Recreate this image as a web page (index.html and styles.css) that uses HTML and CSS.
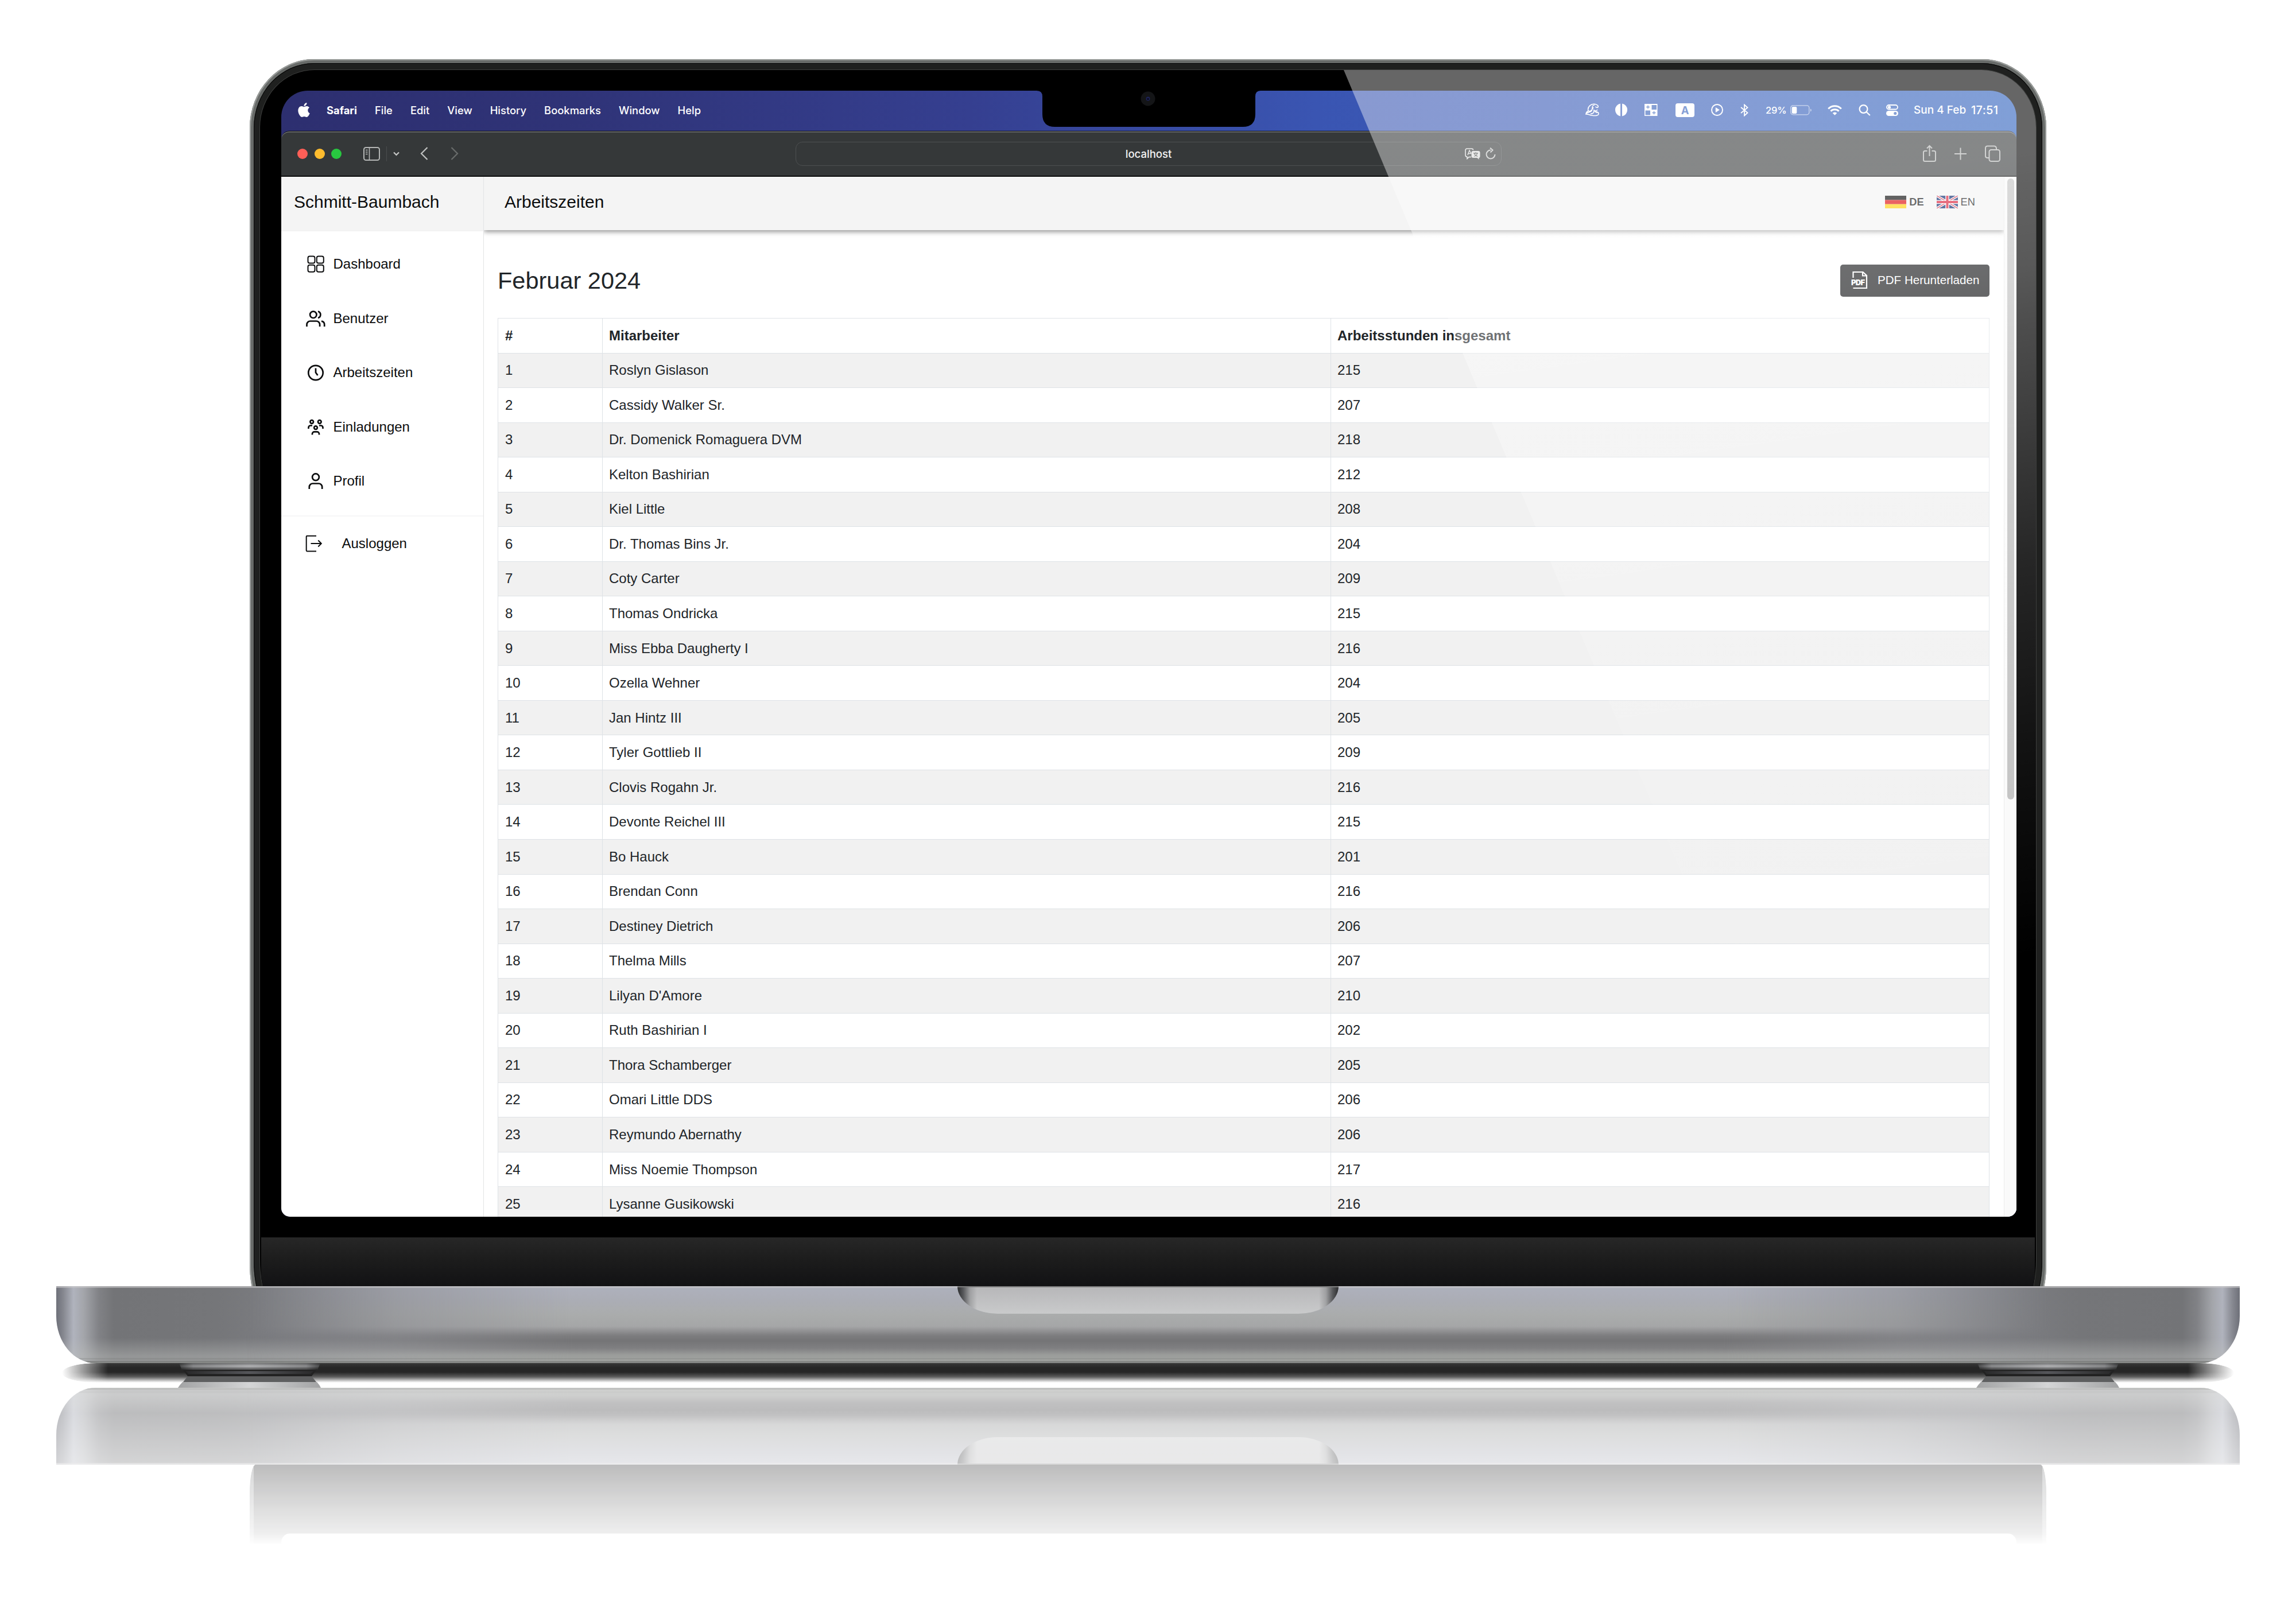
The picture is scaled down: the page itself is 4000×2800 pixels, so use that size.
FILE: index.html
```html
<!DOCTYPE html>
<html lang="de">
<head>
<meta charset="utf-8">
<title>Arbeitszeiten</title>
<link rel="stylesheet" href="styles.css">
</head>
<body>
<div class="laptop">
  <div class="lid"><div class="rim"><div class="glass">
    <div class="screen">
      <header class="menubar">
        <nav class="menus">
          <svg class="apple" width="21" height="25" viewBox="2 0 20 24" fill="#fff"><path d="M12.152 6.896c-.948 0-2.415-1.078-3.96-1.04-2.04.027-3.91 1.183-4.961 3.014-2.117 3.675-.546 9.103 1.519 12.09 1.013 1.454 2.208 3.09 3.792 3.039 1.52-.065 2.09-.987 3.935-.987 1.831 0 2.35.987 3.96.948 1.637-.026 2.676-1.48 3.676-2.948 1.156-1.688 1.636-3.325 1.662-3.415-.039-.013-3.182-1.221-3.22-4.857-.026-3.04 2.48-4.494 2.597-4.559-1.429-2.09-3.623-2.324-4.39-2.376-2-.156-3.675 1.09-4.61 1.09zM15.53 3.83c.843-1.012 1.4-2.427 1.245-3.83-1.207.052-2.662.805-3.532 1.818-.78.896-1.454 2.338-1.273 3.714 1.338.104 2.715-.688 3.559-1.701"/></svg>
          <b>Safari</b><span>File</span><span>Edit</span><span>View</span><span>History</span><span>Bookmarks</span><span>Window</span><span>Help</span>
        </nav>
        <div class="status">
          <svg class="st-wave" width="25" height="23" viewBox="0 0 25 23" fill="none" stroke="#fff" stroke-width="1.6"><path d="M5 13C3 6 10 0 17 1.500c4 .8 6 3 5 5-1 1.500-4 1-4-1M5 13c-3 2-4 4-4 6 4-1 6 2 10 2 5 1 12 1 12-3 0-3-4-3-4-1M5 13c3 2 6 0 9-6M2 17c5-3 10 0 10-9 0-3 2-5 4-5M9 18c5 1 6-3 6-6 2 2 5 1 6-1M16 15c3-1 6 0 6 2"/></svg>
          <svg class="st-split" width="23" height="23" viewBox="0 0 23 23" fill="#fff"><path d="M10 0.500a11.200 11.200 0 0 0 0 22zM13 .5a11.200 11.200 0 0 1 0 22z"/></svg>
          <svg class="st-grid" width="23" height="21" viewBox="0 0 23 21"><path d="M0 0h22.500v21H0z" fill="#fff"/><path d="M12.500 2h8.500v8h-8.500zM1.500 11.500h8.500v8H1.500z" fill="#3560b9"/><path d="M3 5.500h6M6 2.700v5.500M13.500 15.500h6M16.500 12.700v5.500" stroke="#3560b9" stroke-width="1.500"/></svg>
          <span class="st-lang">A</span>
          <svg class="st-play" width="21" height="21" viewBox="0 0 21 21" fill="none"><circle cx="10.500" cy="10.500" r="9.500" stroke="#fff" stroke-width="1.900"/><path d="M7.800 6l7 4.500-7 4.500z" fill="#fff"/></svg>
          <svg class="st-bt" width="14" height="22" viewBox="0 0 14 22" fill="none" stroke="#fff" stroke-width="1.800"><path d="M1 6l11.500 9.500L7 20.500v-19l5.500 5L1 16"/></svg>
          <span class="st-pct">29%</span>
          <svg class="st-bat" width="37" height="18" viewBox="0 0 37 18" fill="none"><rect x=".8" y=".8" width="32" height="16" rx="4" stroke="#fff" stroke-opacity=".6" stroke-width="1.300"/><rect x="2.800" y="3" width="8.500" height="12" rx="2" fill="#fff"/><path d="M35 6.500v5q1.800-.8 1.800-2.500T35 6.500z" fill="#fff" opacity=".6"/></svg>
          <svg class="st-wifi" width="25" height="18" viewBox="0 0 25 18" fill="none" stroke="#fff" stroke-width="3"><path d="M1.200 6.500a16 16 0 0 1 22.600 0M5.500 10.700a10 10 0 0 1 14 0"/><path d="M12.500 17.800l-3.800-3.900a5.500 5.500 0 0 1 7.600 0z" fill="#fff" stroke="none"/></svg>
          <svg class="st-find" width="21" height="20" viewBox="0 0 21 20" fill="none" stroke="#fff" stroke-width="2.200"><circle cx="8.500" cy="8" r="6.900"/><path d="M13.500 13l6.300 6"/></svg>
          <svg class="st-cc" width="21" height="20" viewBox="0 0 21 20"><rect x="1" y="1" width="19" height="7.500" rx="3.700" fill="none" stroke="#fff" stroke-width="1.800"/><circle cx="5.500" cy="4.800" r="2.600" fill="#fff"/><rect x="0" y="11" width="21" height="9" rx="4.500" fill="#fff"/><circle cx="15.800" cy="15.500" r="2.600" fill="#3560b9"/></svg>
          <span class="st-date">Sun 4 Feb</span><span class="st-time">17:51</span>
        </div>
      </header>
      <div class="window">
        <div class="toolbar">
          <div class="tools-left">
            <i class="dot red"></i><i class="dot yellow"></i><i class="dot green"></i>
            <svg class="tb-side" width="29" height="24" viewBox="0 0 29 24" fill="none" stroke="#b4b6b5" stroke-width="2"><rect x="1" y="1" width="27" height="22" rx="3.500"/><path d="M10.500 1v22M4 5.500h3.500M4 9h3.500M4 12.500h3.500" stroke-width="1.600"/></svg>
            <i class="tb-rule"></i>
            <svg class="tb-chev" width="11" height="8" viewBox="0 0 11 8" fill="none" stroke="#c6c8c7" stroke-width="2.200"><path d="M1 1.500l4.500 4.500L10 1.500"/></svg>
            <svg class="tb-back" width="14" height="23" viewBox="0 0 14 23" fill="none" stroke="#c0c2c1" stroke-width="2.200"><path d="M12.500 1L2 11.500 12.500 22"/></svg>
            <svg class="tb-fwd" width="14" height="23" viewBox="0 0 14 23" fill="none" stroke="#696c6b" stroke-width="2.200"><path d="M1.500 1L12 11.500 1.500 22"/></svg>
          </div>
          <div class="address">
            <span>localhost</span>
            <div class="address-icons">
              <svg width="27" height="20" viewBox="0 0 27 20" fill="none"><path d="M11 15.500l-4 .1-3 3v-3.200Q1 15 1 12V4q0-3 3-3h7.500q3 0 3 2.500" stroke="#dcdddc" stroke-width="1.600"/><path d="M5 12l3-8 3 6M6 9.500h4" stroke="#dcdddc" stroke-width="1.400"/><path d="M14.500 5h9q3 0 3 3v6q0 3-2 3v3l-3-3h-7q-3 0-3-3V8q0-3 3-3z" fill="#dcdddc"/><path d="M15 9h8M19 7.300V9M16 14.500q5-1.500 5.500-5.500M16.500 9.500q1 3.500 6 5" stroke="#4b4e4d" stroke-width="1.300"/></svg>
              <svg width="18" height="21" viewBox="0 0 18 21" fill="none" stroke="#c4c6c5" stroke-width="2"><path d="M9 4.500a7.500 7.500 0 1 0 7.500 7.500M8 .7l4.500 3.900L8.500 8.500"/></svg>
            </div>
          </div>
          <div class="tools-right">
            <svg width="23" height="31" viewBox="0 0 23 31" fill="none" stroke="#b4b6b5" stroke-width="2"><path d="M7.500 11H3.500Q1 11 1 13.500v13Q1 29 3.500 29h16q2.500 0 2.500-2.500v-13Q22 11 19.500 11h-4M11.500 20V2M7 6.500L11.500 2 16 6.500"/></svg>
            <svg width="21" height="31" viewBox="0 0 21 31" fill="none" stroke="#b4b6b5" stroke-width="2"><path d="M10.500 5.500v21M0 16h21"/></svg>
            <svg width="27" height="31" viewBox="0 0 27 31" fill="none" stroke="#b4b6b5" stroke-width="2"><rect x="7.500" y="9" width="18.500" height="20" rx="3.500"/><path d="M7 23H4q-3-.5-3-3V6q0-3.500 3.500-3.500h12Q19.500 2.500 20 6v2"/></svg>
          </div>
        </div>
        <div class="page">
          <aside class="sidebar">
            <div class="brand">Schmitt-Baumbach</div>
            <nav class="nav">
              <a><svg width="36" height="36" viewBox="0 0 36 36"><rect x="4.500" y="4.500" width="12" height="12" rx="3"/><rect x="19.800" y="4.500" width="12" height="12" rx="3"/><rect x="4.500" y="19.800" width="12" height="12" rx="3"/><rect x="19.800" y="19.800" width="12" height="12" rx="3"/></svg>Dashboard</a>
              <a><svg class="bold" width="36" height="36" viewBox="0 0 36 36"><circle cx="13.800" cy="11.300" r="5.700"/><path d="M2.500 32v-3.500a6 6 0 0 1 6-6h10.600a6 6 0 0 1 6 6V32M22 5.600a5.900 5.900 0 0 1 0 11.400M28 22.600q5.200.8 5.200 6V32"/></svg>Benutzer</a>
              <a><svg class="bold" width="36" height="36" viewBox="0 0 36 36"><circle cx="18" cy="18.500" r="12.700"/><path d="M18 10.500v7.500l3.500 5"/></svg>Arbeitszeiten</a>
              <a><svg class="bold" width="36" height="36" viewBox="0 0 36 36"><circle cx="11.200" cy="9" r="2.800"/><circle cx="24.800" cy="9" r="2.800"/><circle cx="18" cy="19.200" r="2.800"/><path d="M5.500 21v-2a3.500 3.500 0 0 1 3.500-3.500h3M30.500 21v-2a3.500 3.500 0 0 0-3.500-3.500h-3M12 31.500v-1.500a3.700 3.700 0 0 1 3.700-3.700h4.600a3.700 3.700 0 0 1 3.700 3.700v1.500"/></svg>Einladungen</a>
              <a><svg class="bold" width="36" height="36" viewBox="0 0 36 36"><circle cx="18" cy="11.300" r="5.900"/><path d="M6.800 32v-3.500a6 6 0 0 1 6-6h10.400a6 6 0 0 1 6 6V32"/></svg>Profil</a>
            </nav>
            <a class="logout"><svg width="36" height="36" viewBox="0 0 36 36"><path d="M19 4.800H3q-1.300 0-1.300 1.300v24q0 1.300 1.300 1.300h16M9.500 18H27.500M22.300 12.500l5.500 5.500-5.500 5.500"/></svg>Ausloggen</a>
          </aside>
          <main class="main">
            <div class="topbar">
              <span>Arbeitszeiten</span>
              <div class="langs">
                <svg width="37" height="22" viewBox="0 0 37 22"><path d="M0 0h37v7.400H0z"/><path d="M0 7.400h37v7.300H0z" fill="#d00"/><path d="M0 14.700h37V22H0z" fill="#ffce00"/></svg><b>DE</b>
                <svg class="uk" width="37" height="22" viewBox="0 0 37 22"><path d="M0 0h37v22H0z" fill="#012169"/><path d="M0 0l37 22M37 0L0 22" stroke="#fff" stroke-width="4.200"/><path d="M0 0l37 22M37 0L0 22" stroke="#c8102e" stroke-width="1.500"/><path d="M18.500 0v22M0 11h37" stroke="#fff" stroke-width="6.600"/><path d="M18.500 0v22M0 11h37" stroke="#d8142f" stroke-width="4"/></svg><span>EN</span>
              </div>
            </div>
            <div class="content">
              <div class="headline">
                <h1>Februar 2024</h1>
                <button class="pdf"><svg width="29" height="32" viewBox="0 0 29 32" fill="none" stroke="#fff" stroke-width="2.200"><path d="M3.500 12V2H20.500L27 8v22H3.500M20 2v6.500h7"/><text x="0" y="24.500" textLength="24" font-family="Inter, sans-serif" font-weight="900" font-size="13" fill="#fff" stroke="none">PDF</text></svg>PDF Herunterladen</button>
              </div>
              <table class="hours">
                <thead><tr><th>#</th><th>Mitarbeiter</th><th>Arbeitsstunden insgesamt</th></tr></thead>
                <tbody>
                <tr><td>1</td><td>Roslyn Gislason</td><td>215</td></tr>
                <tr><td>2</td><td>Cassidy Walker Sr.</td><td>207</td></tr>
                <tr><td>3</td><td>Dr. Domenick Romaguera DVM</td><td>218</td></tr>
                <tr><td>4</td><td>Kelton Bashirian</td><td>212</td></tr>
                <tr><td>5</td><td>Kiel Little</td><td>208</td></tr>
                <tr><td>6</td><td>Dr. Thomas Bins Jr.</td><td>204</td></tr>
                <tr><td>7</td><td>Coty Carter</td><td>209</td></tr>
                <tr><td>8</td><td>Thomas Ondricka</td><td>215</td></tr>
                <tr><td>9</td><td>Miss Ebba Daugherty I</td><td>216</td></tr>
                <tr><td>10</td><td>Ozella Wehner</td><td>204</td></tr>
                <tr><td>11</td><td>Jan Hintz III</td><td>205</td></tr>
                <tr><td>12</td><td>Tyler Gottlieb II</td><td>209</td></tr>
                <tr><td>13</td><td>Clovis Rogahn Jr.</td><td>216</td></tr>
                <tr><td>14</td><td>Devonte Reichel III</td><td>215</td></tr>
                <tr><td>15</td><td>Bo Hauck</td><td>201</td></tr>
                <tr><td>16</td><td>Brendan Conn</td><td>216</td></tr>
                <tr><td>17</td><td>Destiney Dietrich</td><td>206</td></tr>
                <tr><td>18</td><td>Thelma Mills</td><td>207</td></tr>
                <tr><td>19</td><td>Lilyan D'Amore</td><td>210</td></tr>
                <tr><td>20</td><td>Ruth Bashirian I</td><td>202</td></tr>
                <tr><td>21</td><td>Thora Schamberger</td><td>205</td></tr>
                <tr><td>22</td><td>Omari Little DDS</td><td>206</td></tr>
                <tr><td>23</td><td>Reymundo Abernathy</td><td>206</td></tr>
                <tr><td>24</td><td>Miss Noemie Thompson</td><td>217</td></tr>
                <tr><td>25</td><td>Lysanne Gusikowski</td><td>216</td></tr>
                </tbody>
              </table>
            </div>
          </main>
          <div class="scrolltrack"><div class="thumb"></div></div>
        </div>
      </div>
      <svg class="notch" width="390" height="64" viewBox="0 0 390 64"><path d="M0 0h390q-9 0-9 10v31q0 22-22 22H32Q10 63 10 41V10Q10 0 0 0z"/><circle cx="194" cy="14" r="12.500" fill="#141517"/><circle cx="194" cy="14" r="3.500" fill="#1c2156"/><circle cx="194" cy="14.500" r="1.500" fill="#05060c"/></svg>
    </div>
    <div class="chin"></div>
    <div class="glare"></div>
  </div></div></div>
  <div class="deck"><div class="grip"></div></div>
  <div class="gap">
    <div class="shadow"></div>
    <svg class="foot" width="250" height="43" viewBox="0 0 250 43"><use href="#footshape"/></svg>
    <svg class="foot" width="250" height="43" viewBox="0 0 250 43">
      <defs>
        <linearGradient id="fa"><stop offset="0" stop-color="#4a4b4c"/><stop offset=".1" stop-color="#8d8e90"/><stop offset=".5" stop-color="#b4b5b7"/><stop offset=".9" stop-color="#8d8e90"/><stop offset="1" stop-color="#4a4b4c"/></linearGradient>
        <linearGradient id="fb" x2="0" y2="1"><stop offset="0" stop-color="#000" stop-opacity=".35"/><stop offset=".45" stop-color="#000" stop-opacity="0"/><stop offset="1" stop-color="#000" stop-opacity=".6"/></linearGradient>
        <linearGradient id="fc"><stop offset="0" stop-color="#2a2a2b"/><stop offset=".5" stop-color="#55565a"/><stop offset="1" stop-color="#2a2a2b"/></linearGradient>
        <linearGradient id="fd"><stop offset="0" stop-color="#a2a3a4"/><stop offset=".5" stop-color="#d4d5d6"/><stop offset="1" stop-color="#a2a3a4"/></linearGradient>
        <g id="footshape"><path d="M2 0h246l-5 12H7z" fill="url(#fa)"/><path d="M2 0h246l-5 12H7z" fill="url(#fb)"/><path d="M9 12h232l-8 11H17z" fill="#222"/><path d="M14 14h222l-5 5H18z" fill="url(#fc)"/><path d="M17 23h216l8 10H9z" fill="#5e5f60"/><path d="M8 33h234q4 4 7 10H0q4-6 8-10z" fill="url(#fd)"/></g>
      </defs>
      <use href="#footshape"/>
    </svg>
  </div>
  <div class="deck-mirror"><div class="deck"><div class="grip"></div></div></div>
  <div class="lid-mirror"><div class="mirror-rim"><div class="mirror-glass"></div></div></div>
</div>
</body>
</html>
```
FILE: styles.css
```css
* { box-sizing: border-box; }
body {
  margin: 0;
  width: 4000px;
  height: 2800px;
  overflow: hidden;
  background: #fff;
  font-family: "Liberation Sans", Arial, sans-serif;
}
svg { display: block; flex: none; }
.laptop { display: flex; flex-direction: column; align-items: center; padding-top: 103px; }

/* Lid */
.lid {
  width: 3130px;
  height: 2199px;
  margin-bottom: -61px;
  padding: 7px;
  background: #686b69;
  border-radius: 112px 112px 45px 45px / 120px 120px 100px 100px;
  box-shadow: inset 0 0 0 1px #8d908e, inset 0 0 0 2px #a4a7a5;
}
.rim {
  height: 100%;
  padding: 12px 11px 0;
  background: #1f201f;
  border-radius: 105px 105px 42px 42px / 113px 113px 98px 98px;
  box-shadow: inset 0 0 0 1px #050505;
}
.glass {
  position: relative;
  height: 100%;
  padding: 36px 34px 0 37px;
  background: #000;
  overflow: hidden;
  border-radius: 95px 95px 42px 42px / 100px 100px 100px 100px;
  box-shadow: 0 0 0 1px #3d3e3d;
}
.chin {
  height: 160px;
  margin: 36px -32px 0 -35px;
  background: linear-gradient(#272727, #1c1c1c 40px, #121214 85px);
  border-radius: 0 0 42px 42px / 0 0 100px 100px;
}
.glare {
  position: absolute;
  top: 0;
  left: 0;
  right: 0;
  height: 1600px;
  clip-path: polygon(1888px 0, 100% 0, 100% 100%, 2560px 100%);
  background: linear-gradient(172deg, rgba(255,255,255,.4), rgba(255,255,255,.4) 570px, rgba(255,255,255,.35) 764px, rgba(255,255,255,.3) 870px, rgba(255,255,255,.15) 1279px, rgba(255,255,255,.07) 1596px, rgba(255,255,255,0) 1960px);
}

/* Screen */
.screen {
  position: relative;
  height: 1962px;
  overflow: hidden;
  display: flex;
  flex-direction: column;
  border-radius: 46px 46px 15px 15px;
  background: linear-gradient(90deg, #2d2f70, #2f3377 500px, #353f90 1200px, #3a55b2 1800px, #3759b6 2200px, #2c5fbc);
}
.notch { position: absolute; left: 1316px; top: 0; }
.menubar {
  height: 70px;
  padding: 0 26px 3px 29px;
  display: flex;
  align-items: center;
  justify-content: space-between;
  color: #fff;
  font: 500 18.4px/24px Inter, sans-serif;
}
.menus { display: flex; align-items: center; gap: 31px; }
.menus b { font-weight: 700; }
.apple { margin-right: -2px; }
.status { display: flex; align-items: center; white-space: nowrap; }
.st-split { margin-left: 26px; }
.st-grid { margin-left: 29.5px; }
.st-lang {
  width: 33px; height: 24px; margin-left: 31px;
  border-radius: 4px; background: #fff; color: #3560b9;
  font-weight: 700; text-align: center;
}
.st-play { margin-left: 29px; }
.st-bt { margin-left: 30px; }
.st-pct { width: 36px; margin-left: 30px; font-size: 16.500px; letter-spacing: -.2px; }
.st-bat { margin-left: 7px; }
.st-wifi { margin-left: 28px; }
.st-find { margin-left: 29px; }
.st-cc { margin-left: 27px; }
.st-date { width: 90px; margin-left: 27px; font-size: 19px; }
.st-time { width: 53px; margin-left: 10px; font-size: 20px; letter-spacing: .3px; }

.window {
  flex: 1;
  min-height: 0;
  display: flex;
  flex-direction: column;
  border-radius: 14px 14px 0 0;
  overflow: hidden;
}
.toolbar {
  height: 80px;
  flex: none;
  display: grid;
  grid-template-columns: 1fr 1228px 1fr;
  align-items: center;
  background: #353839;
  border-top: 1px solid #0b0b0d;
  border-bottom: 2px solid #0c0d0d;
  border-radius: 14px 14px 0 0;
  box-shadow: inset 0 1.500px #747676;
}
.tools-left { display: flex; align-items: center; padding-left: 28px; }
.dot { width: 18px; height: 18px; border-radius: 50%; margin-right: 11.7px; }
.red { background: #ff5f57; }
.yellow { background: #febc2e; }
.green { background: #28c840; }
.tb-side { margin-left: 26px; }
.tb-rule { width: 1px; height: 26px; margin-left: 11px; background: #4a4d4e; }
.tb-chev { margin-left: 11px; }
.tb-back { margin-left: 36px; }
.tb-fwd { margin-left: 39px; }
.address {
  height: 42px;
  display: grid;
  grid-template-columns: 1fr auto 1fr;
  align-items: center;
  margin-left: -2px;
  border: 1.5px solid #4d5051;
  border-radius: 12px;
  padding-right: 9px;
  color: #f4f4f4;
  font: 500 18.5px/24px Inter, sans-serif;
}
.address span { grid-column: 2; margin-left: 10px; }
.address-icons { display: flex; align-items: center; justify-content: flex-end; gap: 9px; }
.tools-right { display: flex; align-items: center; justify-content: flex-end; gap: 32px; padding-right: 28px; }

/* Page */
.page {
  flex: 1;
  min-height: 0;
  display: flex;
  background: #fff;
  font-size: 24px;
  color: #0c0d0e;
}
.sidebar { width: 353px; flex: none; border-right: 1px solid #e3e4e5; }
.brand {
  height: 95px;
  padding: 0 0 6px 22px;
  display: flex;
  align-items: center;
  background: #f4f4f4;
  border-bottom: 1px solid #f0f0f0;
  font-size: 30px;
}
.nav { padding: 10px 0 12px; border-bottom: 2px solid #f6f6f7; }
.nav a, .logout { display: flex; align-items: center; gap: 13px; padding-left: 41.5px; }
.nav a { height: 94.5px; }
.nav svg, .logout svg { fill: none; stroke: #0c0d0e; stroke-width: 2; }
.nav svg.bold { stroke-width: 2.7; }
.logout { height: 94px; gap: 28px; }

.main { flex: 1; min-width: 0; display: flex; flex-direction: column; overflow: hidden; }
.topbar {
  height: 93px;
  flex: none;
  display: flex;
  align-items: center;
  justify-content: space-between;
  padding: 0 50px 5px 36px;
  background: #f4f4f4;
  box-shadow: 0 3px 8px rgba(0,0,0,.42);
  font-size: 30px;
}
.langs { display: flex; align-items: center; font-size: 18.3px; }
.langs svg { margin-right: 5px; }
.langs .uk { margin-left: 22px; }
.content { padding: 60px 25px 0 24px; }
.headline { display: flex; justify-content: space-between; align-items: center; height: 56px; }
.headline h1 { margin: 0; font-size: 41.5px; font-weight: 400; color: #212529; }
.pdf {
  width: 260px; height: 56px;
  display: flex;
  align-items: center;
  gap: 17px;
  padding: 0 0 2px 19px;
  border: 0;
  border-radius: 5px;
  background: #1b1c1e;
  color: #fff;
  font: 20.6px/24px "Liberation Sans", Arial, sans-serif;
  white-space: nowrap;
}
.hours {
  display: block;
  margin-top: 37px;
  color: #212529;
  border: 1px solid #dee2e6;
}
.hours thead, .hours tbody { display: block; }
.hours tr { display: grid; grid-template-columns: 181px 1269px 1fr; height: 60.54px; border-bottom: 1.5px solid #dee2e6; }
.hours th, .hours td { display: flex; align-items: center; padding: 0 0 0 11px; text-align: left; }
.hours td:first-child, .hours th:first-child { padding-left: 12px; }
.hours th + th, .hours td + td { border-left: 1px solid #dee2e6; }
.hours tbody tr:nth-child(odd) { background: #f1f1f1; }

.scrolltrack { width: 22px; flex: none; padding: 3px 0 0 5px; background: #fafafa; border-left: 1px solid #ebebeb; }
.thumb { width: 12px; height: 1082px; border-radius: 6px; background: #c2c2c2; }

/* Base */
.deck {
  position: relative;
  flex: none;
  width: 3804px;
  height: 134px;
  border-radius: 0 0 68px 68px / 0 0 82px 82px;
  overflow: hidden;
  background:
    linear-gradient(transparent 90px, rgba(190,192,190,.45) 122px, rgba(170,172,170,.5)),
    linear-gradient(90deg, #6e7079, #85878f 12px, #b0b3bd 30px, #a3a5aa 48px, #818286 74px, #737477 100px, #757679 280px, #808186 450px, #8c8d92 600px, #8c8d92 3204px, #808186 3354px, #757679 3524px, #737477 3704px, #818286 3730px, #a3a5aa 3756px, #b0b3bd 3774px, #85878f 3792px, #6e7079);
}
.deck::before {
  content: "";
  position: absolute;
  inset: 0;
  background: linear-gradient(#aeb1bd, #abadb5 25px, #aaacac 50px, #a5a6a7 70px, #7d7d7f 86px, #747476 95px, #7f7f81 108px, #9b9d9b 120px, #a0a29f);
  -webkit-mask-image: linear-gradient(90deg, transparent 330px, #000 900px, #000 2904px, transparent 3474px);
  mask-image: linear-gradient(90deg, transparent 330px, #000 900px, #000 2904px, transparent 3474px);
}
.deck::after {
  content: "";
  position: absolute;
  inset: 0;
  background: linear-gradient(rgba(200,199,201,.6) 3px, transparent 3px, transparent 126px, rgba(110,112,110,.7) 126px, transparent 127px, transparent 130px, #757775 132px, #9a9c9a);
}
.grip {
  position: absolute;
  z-index: 1;
  left: 1570px;
  top: 0;
  width: 664px;
  height: 48px;
  border-radius: 0 0 70px 70px / 0 0 48px 48px;
  border-top: 2px solid #7d7d7e;
  background:
    linear-gradient(90deg, #2c2d2f, #56575a 10px, rgba(140,141,143,.6) 22px, transparent 34px, transparent 630px, rgba(140,141,143,.6) 642px, #56575a 654px, #2c2d2f),
    linear-gradient(#b7b7b9, #c9cacb);
}
.gap {
  position: relative;
  flex: none;
  width: 3804px;
  height: 43px;
  display: flex;
  justify-content: space-between;
  padding: 0 209px 0 212px;
}
.foot { position: relative; }
.shadow {
  position: absolute;
  left: 10px;
  right: 10px;
  top: 0;
  height: 34px;
  background: linear-gradient(#383838, #262626 8px, #262626 16px, rgba(38,38,38,.75) 24px, transparent);
  border-radius: 60px / 17px;
  -webkit-mask-image: linear-gradient(90deg, transparent, #000 80px, #000 3704px, transparent);
  mask-image: linear-gradient(90deg, transparent, #000 80px, #000 3704px, transparent);
}

/* Floor reflection */
.deck-mirror {
  transform: scaleY(-1);
  -webkit-mask-image: linear-gradient(rgba(0,0,0,.3), rgba(0,0,0,.48) 90px, rgba(0,0,0,.5));
  mask-image: linear-gradient(rgba(0,0,0,.3), rgba(0,0,0,.48) 90px, rgba(0,0,0,.5));
}
.lid-mirror {
  width: 3130px;
  height: 140px;
  overflow: hidden;
  -webkit-mask-image: linear-gradient(rgba(0,0,0,.29), rgba(0,0,0,.15) 75px, rgba(0,0,0,.07) 120px, transparent);
  mask-image: linear-gradient(rgba(0,0,0,.29), rgba(0,0,0,.15) 75px, rgba(0,0,0,.07) 120px, transparent);
}
.mirror-rim {
  height: 240px;
  margin-top: -61px;
  padding-top: 181px;
  border: solid #77797a;
  border-width: 0 7px;
  border-radius: 0 0 0 0;
  background: #1a1a1b;
}
.mirror-glass {
  width: 3023px;
  height: 59px;
  margin-left: 48px;
  border-radius: 15px 15px 0 0;
  background: #fff;
}
.lid-mirror { border-radius: 10px 10px 0 0 / 50px 50px 0 0; }
```
